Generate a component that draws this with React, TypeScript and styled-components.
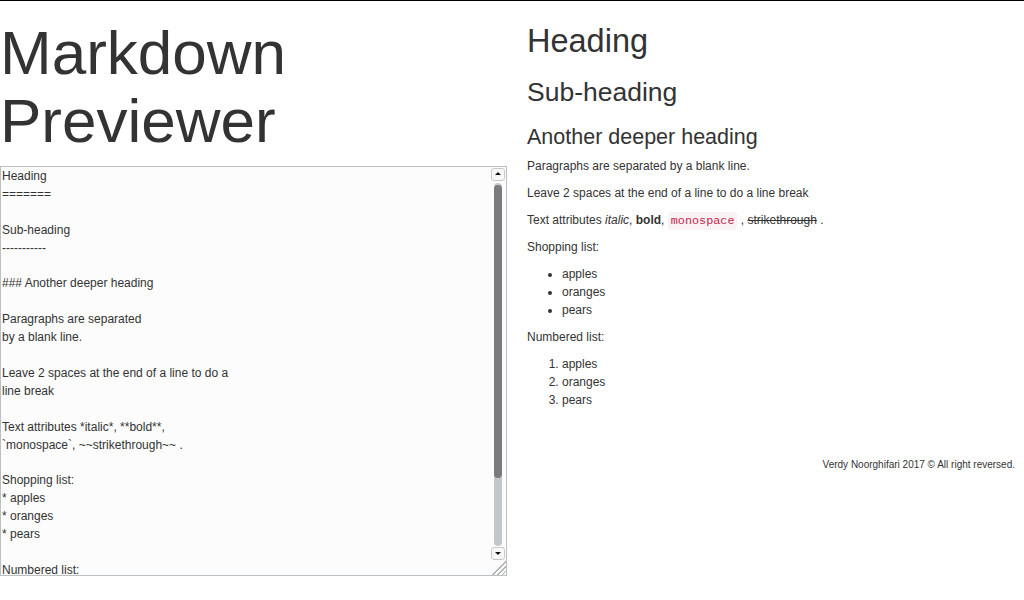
import React, { useLayoutEffect, useRef, useState } from 'react';
import styled, { createGlobalStyle } from 'styled-components';

const GlobalStyle = createGlobalStyle`
  html, body {
    margin: 0;
    padding: 0;
    background: #fff;
  }

  body {
    border-top: 1px solid #000;
    font-family: "Liberation Sans", Arial, sans-serif;
    font-size: 12px;
    line-height: 18px;
    color: #333;
  }
`;

const Page = styled.div`
  display: grid;
  grid-template-columns: 507px 1fr;
  column-gap: 20px;
  align-items: start;
`;

const EditorColumn = styled.section`
  display: flex;
  flex-direction: column;
`;

const Title = styled.h1`
  margin: 18px 0 11px;
  font-size: 62px;
  line-height: 68px;
  font-weight: 400;
  color: #333;
`;

const EditorFrame = styled.div`
  position: relative;
  width: 507px;
  height: 410px;
`;

const Editor = styled.textarea`
  box-sizing: border-box;
  display: block;
  width: 100%;
  height: 100%;
  margin: 0;
  padding: 1px 16px 0 1px;
  border: 1px solid #bcc0c4;
  background: #fcfcfc;
  color: #333;
  font-family: "Liberation Sans", Arial, sans-serif;
  font-size: 12px;
  line-height: 17.9px;
  resize: none;
  outline: none;
  overflow-y: scroll;
  scrollbar-width: none;

  &::-webkit-scrollbar {
    display: none;
  }
`;

/* drawn scrollbar, laid over the right edge of the textarea */
const ScrollBar = styled.div`
  position: absolute;
  top: 1px;
  right: 1px;
  bottom: 16px;
  width: 15px;
  display: flex;
  flex-direction: column;
  pointer-events: none;
`;

const ArrowButton = styled.div<{ $dir: 'up' | 'down' }>`
  box-sizing: border-box;
  position: relative;
  flex: none;
  height: 13px;
  width: 14px;
  margin: ${({ $dir }) => ($dir === 'up' ? '1px 1px 1px 0' : '1px 1px 0 0')};
  border: 1px solid #c6c8ca;
  border-radius: 3px;
  background: #f8f8f8;

  &::after {
    content: '';
    position: absolute;
    left: 3px;
    top: ${({ $dir }) => ($dir === 'up' ? '3px' : '4px')};
    border-left: 3px solid transparent;
    border-right: 3px solid transparent;
    ${({ $dir }) =>
      $dir === 'up' ? 'border-bottom: 3px solid #111;' : 'border-top: 3px solid #111;'}
  }
`;

const Rail = styled.div`
  position: relative;
  flex: 1;
  width: 8px;
  margin: 1px 0 0 3px;
  border-radius: 4px;
  background: #c3c7cb;
`;

const Thumb = styled.div`
  position: absolute;
  left: 0;
  right: 0;
  border-radius: 4px;
  background: #7b7b7d;
`;

const Resizer = styled.div`
  position: absolute;
  right: 1px;
  bottom: 1px;
  width: 15px;
  height: 15px;
  pointer-events: none;
  background: linear-gradient(
    135deg,
    transparent 0 52%,
    #b0b0b0 52% 58%,
    transparent 58% 68%,
    #b0b0b0 68% 74%,
    transparent 74% 84%,
    #b0b0b0 84% 90%,
    transparent 90%
  );
`;

const PreviewColumn = styled.section`
  padding-right: 9px;
`;

const Preview = styled.article`
  h1, h2, h3 {
    font-weight: 400;
    color: #333;
  }
`;

const H1 = styled.h1`
  margin: 22px 0 0;
  font-size: 32.5px;
  line-height: 36px;
`;

const H2 = styled.h2`
  margin: 19px 0 0;
  font-size: 26.5px;
  line-height: 29px;
`;

const H3 = styled.h3`
  margin: 18px 0 8px;
  font-size: 21.5px;
  line-height: 24px;
`;

const P = styled.p`
  margin: 0 0 9px;
`;

const Code = styled.code`
  padding: 2px 3px;
  font-family: "Liberation Mono", "Courier New", monospace;
  font-size: 11.8px;
  line-height: 1;
  color: #c7254e;
  background: #f9f2f4;
  border-radius: 4px;
`;

const List = styled.ul`
  margin: 0 0 9px;
  padding-left: 35px;
`;

const OrderedList = styled.ol`
  margin: 0 0 9px;
  padding-left: 35px;
`;

const Footer = styled.footer`
  margin-top: 49px;
  text-align: right;
  font-size: 10px;
  line-height: 14px;
  color: #333;
`;

const source = `Heading
=======

Sub-heading
-----------

### Another deeper heading

Paragraphs are separated
by a blank line.

Leave 2 spaces at the end of a line to do a  
line break

Text attributes *italic*, **bold**,
\`monospace\`, ~~strikethrough~~ .

Shopping list:
* apples
* oranges
* pears

Numbered list:
1. apples
2. oranges
3. pears

`;

export default function App() {
  const [text, setText] = useState(source);
  const editorRef = useRef<HTMLTextAreaElement>(null);
  const railRef = useRef<HTMLDivElement>(null);
  const [thumb, setThumb] = useState({ top: 2, height: 294 });

  const measure = () => {
    const el = editorRef.current;
    const rail = railRef.current;
    if (!el || !rail) return;
    const railHeight = rail.clientHeight;
    const ratio = Math.min(1, el.clientHeight / el.scrollHeight);
    const height = Math.max(20, railHeight * ratio);
    const maxScroll = el.scrollHeight - el.clientHeight;
    const top = 2 + (maxScroll > 0 ? (el.scrollTop / maxScroll) * (railHeight - height - 2) : 0);
    setThumb({ top, height: height - 2 });
  };

  useLayoutEffect(measure, [text]);

  return (
    <>
      <GlobalStyle />
      <Page>
        <EditorColumn>
          <Title>
            Markdown
            <br />
            Previewer
          </Title>
          <EditorFrame>
            <Editor
              ref={editorRef}
              value={text}
              onChange={(e) => setText(e.target.value)}
              onScroll={measure}
            />
            <ScrollBar>
              <ArrowButton $dir="up" />
              <Rail ref={railRef}>
                <Thumb style={{ top: thumb.top, height: thumb.height }} />
              </Rail>
              <ArrowButton $dir="down" />
            </ScrollBar>
            <Resizer />
          </EditorFrame>
        </EditorColumn>

        <PreviewColumn>
          <Preview>
            <H1>Heading</H1>
            <H2>Sub-heading</H2>
            <H3>Another deeper heading</H3>
            <P>Paragraphs are separated by a blank line.</P>
            <P>Leave 2 spaces at the end of a line to do a line break</P>
            <P>
              Text attributes <em>italic</em>, <strong>bold</strong>,{' '}
              <Code>monospace</Code> , <del>strikethrough</del> .
            </P>
            <P>Shopping list:</P>
            <List>
              <li>apples</li>
              <li>oranges</li>
              <li>pears</li>
            </List>
            <P>Numbered list:</P>
            <OrderedList>
              <li>apples</li>
              <li>oranges</li>
              <li>pears</li>
            </OrderedList>
          </Preview>
          <Footer>Verdy Noorghifari 2017 © All right reversed.</Footer>
        </PreviewColumn>
      </Page>
    </>
  );
}
